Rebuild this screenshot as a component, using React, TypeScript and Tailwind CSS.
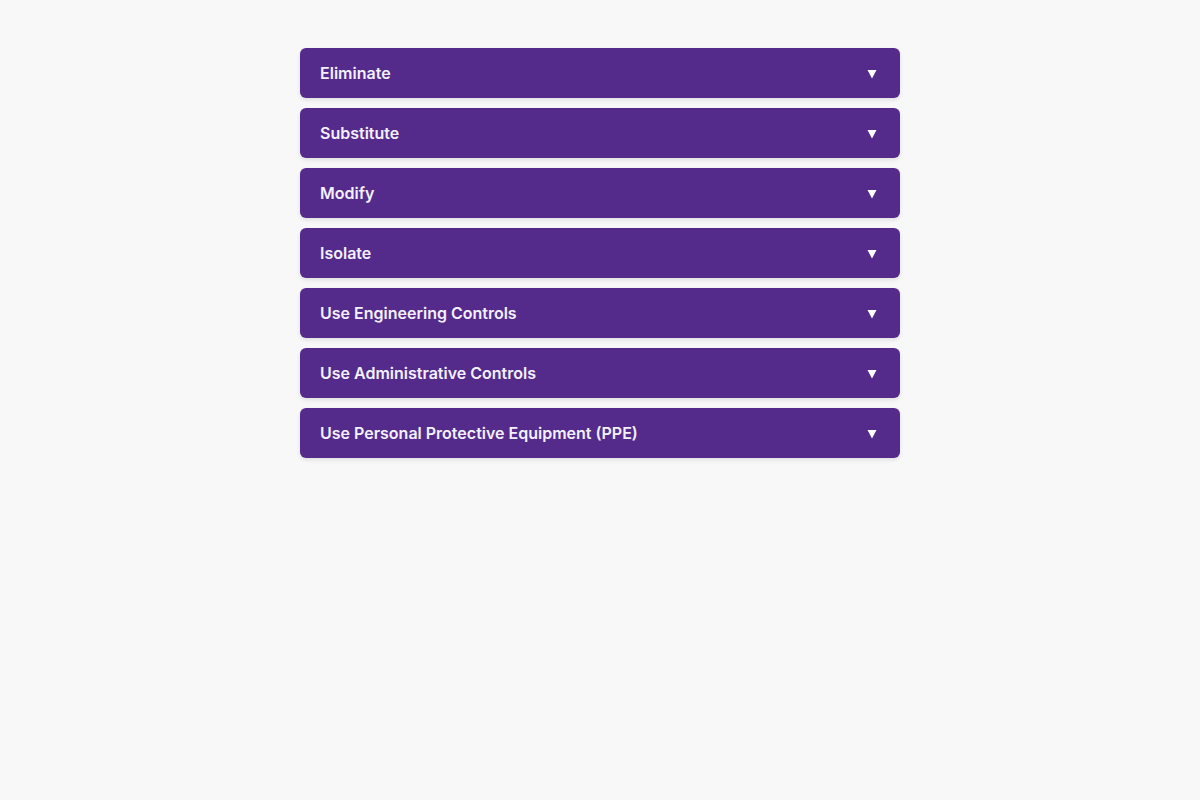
import React from "react";

const items = [
  "Eliminate",
  "Substitute",
  "Modify",
  "Isolate",
  "Use Engineering Controls",
  "Use Administrative Controls",
  "Use Personal Protective Equipment (PPE)",
];

export default function App() {
  return (
    <div className="min-h-screen bg-[#f8f8f8] pt-12" style={{ fontFamily: "Inter, 'Noto Sans', sans-serif" }}>
      <div className="mx-auto w-[600px] flex flex-col gap-[10px]">
        {items.map((t) => (
          <div
            key={t}
            className="flex h-[50px] items-center justify-between rounded-md bg-[#542a8a] pl-5 pr-[23px] text-white shadow-[0_2px_4px_rgba(0,0,0,0.1)]"
          >
            <span className="text-base font-semibold text-[#f3f0ff]">{t}</span>
            <svg width="10" height="10" viewBox="0 0 10 10" className="mt-[1px]">
              <polygon points="0.5,1 9.5,1 5,9.5" fill="#ffffff" />
            </svg>
          </div>
        ))}
      </div>
    </div>
  );
}
